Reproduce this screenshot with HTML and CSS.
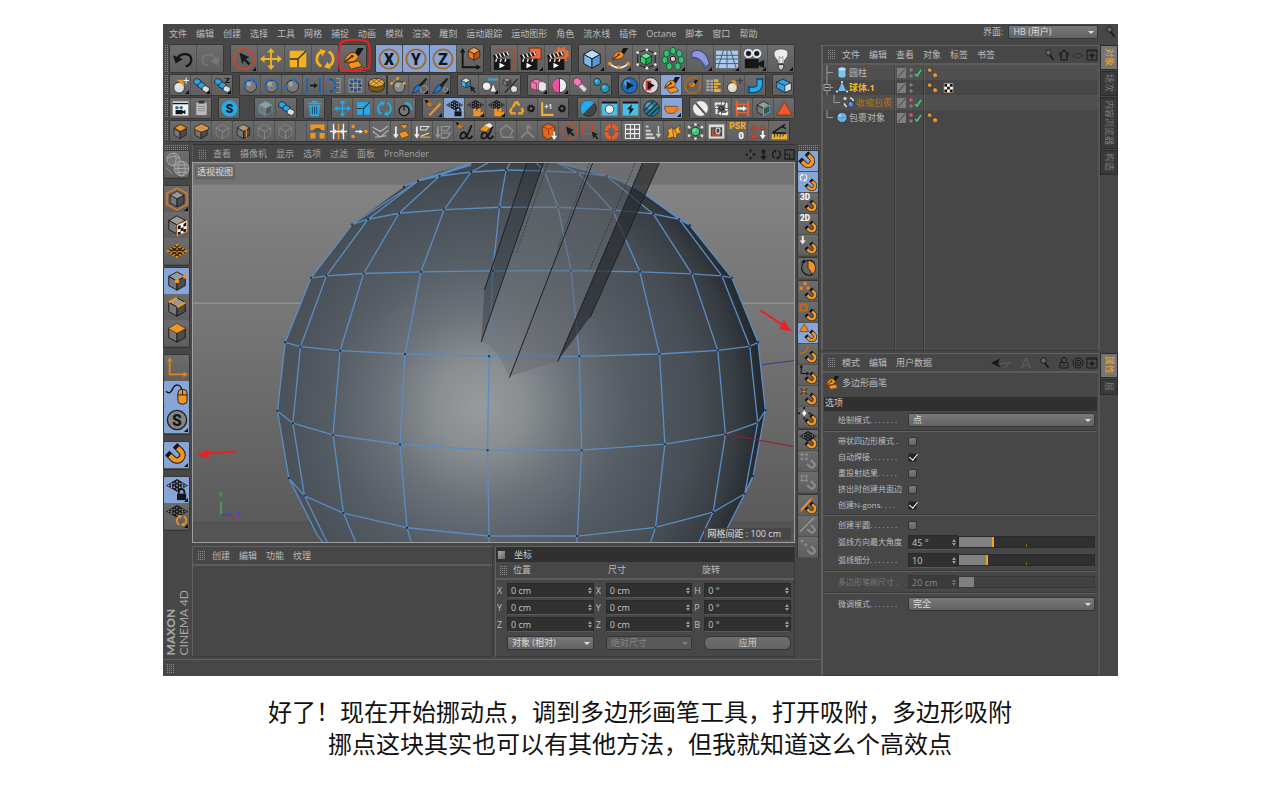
FILE: index.html
```html
<!DOCTYPE html>
<html lang="zh-CN">
<head>
  <meta charset="UTF-8">
  <meta name="viewport" content="width=device-width, initial-scale=1.0">
  <title>多边形画笔</title>
  <link rel="stylesheet" href="styles.css">
</head>
<body>

<main class="app">
  <div class="left">
    <nav class="menubar">
      <a href="#">文件</a><a href="#">编辑</a><a href="#">创建</a><a href="#">选择</a><a href="#">工具</a><a href="#">网格</a><a href="#">捕捉</a><a href="#">动画</a><a href="#">模拟</a><a href="#">渲染</a><a href="#">雕刻</a><a href="#">运动跟踪</a><a href="#">运动图形</a><a href="#">角色</a><a href="#">流水线</a><a href="#">插件</a><a href="#">Octane</a><a href="#">脚本</a><a href="#">窗口</a><a href="#">帮助</a>
    </nav>

    <div class="toolbars">
      <div class="toolbar big" data-tools="undo redo | select* move scale rotate |t pen*^ |w axisX! axisY! axisZ! axisCube | render renderView* renderSet | cubeBlue* spline* subdiv* array* bend* floor* camera* bulb*"></div>
      <div class="toolbar" data-tools="ballStar* slabs* slabsZ* | ballDots ballDots2 ballDots3 arrowsH bracket lattice gold |t ballPin brush1* brush2* | magnetCube figure* cubeBall | pinkCubes* pinkBall* pinkTube teal | playBlue playRed pen! penRing bricks ballPlus pipe | blueBox"></div>
      <div class="toolbar" data-tools="film clip | sBlue |x cubeTeal slabs | trash | moveB scaleB rotateB ballArc | penStick* gridLock! gridCam* gridCam* recycleW axisGearW |w ballHalf screen bolt ballHatch cup!* | slash cycle ladder cubeEdge triRed"></div>
      <div class="toolbar" data-tools="cubeO cubeO2 cubeGhost cubeSplit cubeGhost cubeGhost - bridge stretch dotsO fold weldO weld2 weldGhost penA penB polyGhost armGhost shieldO selRing selBox ringO gridW barsDown puzzle molecule frameAxis psr tris ruler"></div>
    </div>

    <div class="middle">
      <aside class="modes">
        <span class="dots-h"></span>
        <div class="col" data-tools="spheres | modeCube* modeTex modeGrid | modePoint! modeEdge modePoly | modeAxis mouse! sGray!* | magnet!* | gridLock!* gridRot*"></div>
        <div class="brand"><b>MAXON</b><span>CINEMA 4D</span></div>
      </aside>

      <section class="center">
        <header class="viewbar">
          <span class="grip"></span>
          <a href="#">查看</a><a href="#">摄像机</a><a href="#">显示</a><a href="#">选项</a><a href="#">过滤</a><a href="#">面板</a><a href="#">ProRender</a>
          <span class="navicons"><i data-icon="navMove"></i><i data-icon="navZoom"></i><i data-icon="navRot"></i><i data-icon="navMax"></i></span>
        </header>
        <div class="viewport">
          <span class="viewname">透视视图</span>
          <svg viewBox="-231 9 1806 1140">
            <defs>
              <linearGradient id="sky" x1="0" y1="0" x2="0" y2="1">
                <stop offset="0" stop-color="#868686"/><stop offset="1" stop-color="#757575"/>
              </linearGradient>
              <linearGradient id="ground" x1="0" y1="0" x2="0" y2="1">
                <stop offset="0" stop-color="#787878"/><stop offset="1" stop-color="#585858"/>
              </linearGradient>
              <radialGradient id="shade" gradientUnits="userSpaceOnUse" cx="630" cy="740" r="900">
                <stop offset="0" stop-color="#979b9e"/>
                <stop offset=".15" stop-color="#898e91"/>
                <stop offset=".32" stop-color="#6b7178"/>
                <stop offset=".5" stop-color="#545c64"/>
                <stop offset=".72" stop-color="#474e55"/>
                <stop offset=".86" stop-color="#373d43"/>
                <stop offset="1" stop-color="#181c20"/>
              </radialGradient>
            </defs>
            <rect x="-231" y="9" width="1806" height="421" fill="url(#sky)"/>
            <rect x="-231" y="9" width="1806" height="65" fill="#727272"/>
            <rect x="-231" y="430" width="1806" height="719" fill="url(#ground)"/>
            <rect x="-231" y="1085" width="1806" height="64" fill="#545454"/>
            <path d="M-231 430H1575" stroke="#a2a2a2" stroke-width="3"/>
            <!-- sphere body -->
            <path fill="url(#shade)" d="M605 9L510 36 403 80 247 194 124 354 46 548 23 754 57 956 143 1128 160 1149H1353L1427 1003 1452 950 1489 752 1467 548 1388 354 1262 196 1110 92 1012 48 870 9z"/>
            <g class="wire">
              <path d="M403 80L445 63 510 48 605 36 710 30 825 33 925 38 1012 48 1075 65 1110 92"/>
              <path d="M247 194L295 178 388 160 524 149 690 142 866 142 1030 150 1152 162 1230 178 1262 196"/>
              <path d="M124 354L170 348 282 341 454 336 670 333 905 332 1112 336 1268 342 1358 348 1388 354"/>
              <path d="M46 548L92 561 211 573 406 583 659 590 930 590 1171 583 1346 572 1442 560 1467 548"/>
              <path d="M23 754L69 791 190 826 391 855 654 872 937 872 1187 854 1369 824 1466 789 1489 752"/>
              <path d="M57 956L104 1009 221 1061 412 1105 659 1130 924 1130 1159 1104 1332 1058 1427 1003 1452 950"/>
              <path d="M605 9L445 63 247 194 124 354 46 548 23 754 57 956 143 1128 160 1149"/>
              <path d="M605 15L445 63 295 178 170 348 92 561 69 791 104 1009 172 1149"/>
              <path d="M605 9L510 48 388 160 282 341 211 573 190 826 221 1061 258 1149"/>
              <path d="M655 9L605 36 524 149 454 336 406 583 391 855 412 1105 425 1149"/>
              <path d="M722 9L710 30 690 142 670 333 659 590 654 872 659 1149"/>
              <path d="M800 9L825 33 866 142 905 332 930 590 937 872 924 1130 922 1149"/>
              <path d="M862 9L925 38 1030 150 1112 336 1171 583 1187 854 1159 1104 1144 1149"/>
              <path d="M890 14L1012 48 1152 162 1268 342 1346 572 1369 824 1332 1058 1289 1149"/>
              <path d="M870 9L1075 65 1230 178 1358 348 1442 560 1466 789 1427 1003 1353 1149"/>
              <path d="M1075 65L1262 196 1388 354 1467 548 1489 752 1452 950 1427 1003"/>
            </g>
            <path class="points" d="M403 80h0M445 63h0M510 48h0M605 36h0M710 30h0M825 33h0M925 38h0M1012 48h0M247 194h0M295 178h0M388 160h0M524 149h0M690 142h0M866 142h0M1030 150h0M1152 162h0M1230 178h0M1262 196h0M124 354h0M170 348h0M282 341h0M454 336h0M670 333h0M905 332h0M1112 336h0M1268 342h0M1358 348h0M1388 354h0M46 548h0M92 561h0M211 573h0M406 583h0M659 590h0M930 590h0M1171 583h0M1346 572h0M1442 560h0M1467 548h0M23 754h0M69 791h0M190 826h0M391 855h0M654 872h0M937 872h0M1187 854h0M1369 824h0M1466 789h0M1489 752h0M57 956h0M104 1009h0M221 1061h0M412 1105h0M659 1130h0M924 1130h0M1159 1104h0M1332 1058h0M1427 1003h0M1452 950h0"/>
            <!-- cylinder -->
            <path fill="#2c3237" fill-opacity=".4" d="M772 9H822L635 545 645 388z"/>
            <path fill="#6c7176" fill-opacity=".5" d="M822 9H970L720 650 690 592 660 557 635 545z"/>
            <path fill="#656a70" fill-opacity=".5" d="M970 9H1120L865 604 720 650z"/>
            <path fill="#2a2c2f" fill-opacity=".7" d="M1120 9H1170L962 472 865 604z"/>
            <path fill="none" stroke="#1d2023" stroke-width="3" d="M772 9L645 390M822 9L635 547M970 9L720 654M1120 9L865 606M1170 9L962 474"/>
            <path fill="none" stroke="#2a2e32" stroke-width="2" stroke-dasharray="6 4" d="M836 9L740 280M960 9L866 262M1098 9L962 328"/>
            <!-- world axes -->
            <path d="M1478 615L1575 603" stroke="#3a3a9a" stroke-width="3"/>
            <path d="M1369 824L1575 861" stroke="#8e2028" stroke-width="3"/>
            <path d="M-147 1027V1067" stroke="#4db04d" stroke-width="4"/>
            <path d="M-147 1067H-114" stroke="#3a3ad0" stroke-width="4"/>
            <path d="M-138 1069H-118" stroke="#c03030" stroke-width="3"/>
            <g font-family="Open Sans, sans-serif" font-size="24">
              <text x="-155" y="1014" fill="#4fc04f">Y</text>
              <text x="-108" y="1078" fill="#d03030">X</text>
              <text x="-102" y="1073" fill="#3c3cf0">Z</text>
            </g>
            <g class="marks">
              <path d="M-105 876L-190 882"/><path class="tip" d="M-216 886L-182 870 -190 882 -180 896z"/>
              <path d="M1476 453L1542 496"/><path class="tip" d="M1566 514L1530 507 1541 496 1544 482z"/>
            </g>
          </svg>
          <span class="spacing">网格间距 : 100 cm</span>
        </div>

        <div class="bottom">
          <section class="panel materials">
            <header><span class="grip"></span><a href="#">创建</a><a href="#">编辑</a><a href="#">功能</a><a href="#">纹理</a></header>
          </section>
          <section class="panel coords">
            <h2><i class="led"></i>坐标</h2>
            <div class="heads"><span class="grip"></span><span>位置</span><span>尺寸</span><span>旋转</span></div>
            <form class="grid">
              <label for="px">X</label><span class="num"><input id="px" value="0 cm"></span>
              <label for="sx">X</label><span class="num"><input id="sx" value="0 cm"></span>
              <label for="rh">H</label><span class="num"><input id="rh" value="0 °"></span>
              <label for="py">Y</label><span class="num"><input id="py" value="0 cm"></span>
              <label for="sy">Y</label><span class="num"><input id="sy" value="0 cm"></span>
              <label for="rp">P</label><span class="num"><input id="rp" value="0 °"></span>
              <label for="pz">Z</label><span class="num"><input id="pz" value="0 cm"></span>
              <label for="sz">Z</label><span class="num"><input id="sz" value="0 cm"></span>
              <label for="rb">B</label><span class="num"><input id="rb" value="0 °"></span>
              <span class="drop c2"><select aria-label="坐标"><option>对象 (相对)</option></select></span>
              <span class="drop c4 off"><select aria-label="尺寸" disabled><option>绝对尺寸</option></select></span>
              <button type="button" class="apply">应用</button>
            </form>
          </section>
        </div>
      </section>

      <aside class="snaps">
        <span class="dots-h"></span>
        <div class="col small" data-tools="magnet! snapRot! snap3D snap2D snapDown | pieO | snapPts snapSq snapTri! snapArc snapAxis snapX snapStar | snapGrid snapG1 snapG2 | snapLine snapG3 snapG4"></div>
      </aside>
    </div>

    <footer class="status"><span class="grip"></span></footer>
  </div>

  <div class="right">
    <div class="layout">
      <label for="layout">界面:</label>
      <span class="drop"><select id="layout"><option>HB (用户)</option></select></span>
      <i data-icon="search"></i>
    </div>

    <section class="dock objects">
      <div class="panel">
        <header>
          <span class="grip"></span><a href="#">文件</a><a href="#">编辑</a><a href="#">查看</a><a href="#">对象</a><a href="#">标签</a><a href="#">书签</a>
          <span class="tools"><i data-icon="search"></i><i data-icon="home"></i><i data-icon="eye"></i><i data-icon="plusBox"></i></span>
        </header>
        <ul class="tree">
          <li><span class="name"><i data-icon="branch"></i><i data-icon="objCyl"></i>圆柱</span><span class="flags" data-flags="gray check"></span><span class="tags"><i data-icon="phong"></i></span></li>
          <li class="sel"><span class="name"><i data-icon="branchBox"></i><i data-icon="objPoly"></i>球体.1</span><span class="flags" data-flags="gray"></span><span class="tags"><i data-icon="phong"></i><i data-icon="checker"></i></span></li>
          <li class="child"><span class="name"><i data-icon="branchEnd"></i><i data-icon="objWrap"></i>收缩包裹</span><span class="flags" data-flags="red check"></span><span class="tags"></span></li>
          <li><span class="name"><i data-icon="branchEnd"></i><i data-icon="objBall"></i>包裹对象</span><span class="flags" data-flags="red check"></span><span class="tags"><i data-icon="phong"></i></span></li>
        </ul>
      </div>
      <nav class="tabs"><a href="#" class="on">对象</a><a href="#">场次</a><a href="#">内容浏览器</a><a href="#">构造</a></nav>
    </section>

    <section class="dock attrs">
      <div class="panel">
        <header>
          <span class="grip"></span><a href="#">模式</a><a href="#">编辑</a><a href="#">用户数据</a>
          <span class="tools"><i data-icon="backFwd" class="wide"></i><i data-icon="upGhost" class="apart"></i><i data-icon="search" class="apart"></i><i data-icon="lock"></i><i data-icon="target"></i><i data-icon="plusBox"></i></span>
        </header>
        <div class="toolname"><i data-icon="pen"></i>多边形画笔</div>
        <h2>选项</h2>
        <form>
          <div class="row tall"><label for="mode">绘制模式<span>. . . . . . .</span></label><span class="drop"><select id="mode"><option>点</option></select></span></div>
          <hr>
          <div class="row"><label for="strip">带状四边形模式<span> .</span></label><input type="checkbox" id="strip"></div>
          <div class="row"><label for="weld">自动焊接<span>. . . . . . .</span></label><input type="checkbox" id="weld" checked></div>
          <div class="row"><label for="proj">重投射结果<span>. . . . .</span></label><input type="checkbox" id="proj"></div>
          <div class="row"><label for="coplanar">挤出时创建共面边</label><input type="checkbox" id="coplanar"></div>
          <div class="row"><label for="ngons">创建N-gons<span>. . . .</span></label><input type="checkbox" id="ngons" checked></div>
          <hr>
          <div class="row"><label for="half">创建半圆<span>. . . . . . .</span></label><input type="checkbox" id="half"></div>
          <div class="row tall"><label for="angle">弧线方向最大角度</label><span class="num"><input id="angle" value="45 °"></span><input type="range" aria-label="弧线方向最大角度" min="0" max="180" value="45" style="--fill:25%"></div>
          <div class="row tall"><label for="subd">弧线细分<span>. . . . . . .</span></label><span class="num"><input id="subd" value="10"></span><input type="range" aria-label="弧线细分" min="0" max="50" value="10" style="--fill:20%"></div>
          <hr>
          <div class="row tall off"><label for="size">多边形笔刷尺寸<span> .</span></label><span class="num"><input id="size" value="20 cm" disabled></span><input type="range" aria-label="多边形笔刷尺寸" min="0" max="200" value="20" style="--fill:10%" disabled></div>
          <hr>
          <div class="row tall"><label for="tweak">微调模式<span>. . . . . . .</span></label><span class="drop"><select id="tweak"><option>完全</option></select></span></div>
        </form>
      </div>
      <nav class="tabs"><a href="#" class="on">属性</a><a href="#">层</a></nav>
    </section>
  </div>
</main>

<p class="caption">好了！现在开始挪动点，调到多边形画笔工具，打开吸附，多边形吸附<br>挪点这块其实也可以有其他方法，但我就知道这么个高效点</p>

<script src="icons.js"></script>
</body>
</html>
```
FILE: styles.css
```css
* {
  box-sizing: border-box;
}
body {
  margin: 0;
  background: #fff;
  font-family: "Open Sans", "Noto Sans CJK SC", sans-serif;
}
.app {
  display: grid;
  grid-template-columns: 1fr 298px;
  margin: 24px 162px 0 163px;
  background: #474747;
  color: #bcbcbc;
  font-size: 9px;
  line-height: 12px;
}
a {
  color: inherit;
  text-decoration: none;
  white-space: nowrap;
}
h2 {
  margin: 0;
  font-size: 9px;
  font-weight: normal;
}
i {
  display: inline-flex;
  font-style: normal;
}
svg {
  display: block;
}
.grip, .dots-h, .toolbar::before {
  flex: none;
  background: conic-gradient(#8c8c8c 25%, transparent 0) 0 0 / 2px 2px;
}
.grip {
  width: 9px;
  height: 9px;
}
.dots-h {
  height: 5px;
}

/* menus and toolbars */
.menubar {
  display: flex;
  gap: 9px;
  height: 19px;
  align-items: center;
  padding: 0 6px;
}
.toolbars {
  display: flex;
  flex-direction: column;
  gap: 3px;
  padding: 2px 0 3px 1px;
}
.toolbar {
  display: flex;
  height: 20px;
}
.toolbar.big {
  height: 27px;
}
.toolbar::before {
  content: "";
  width: 5px;
  margin-right: 1px;
}
.group {
  display: flex;
  gap: 1px;
  margin-right: 8px;
  background: #525252;
  border-radius: 2px;
  box-shadow: 0 0 0 1px #363636;
}
.group.before-tight {
  margin-right: 2px;
}
.group.before-wide {
  margin-right: 10px;
}
.group.before-extra {
  margin-right: 16px;
}
.tool {
  position: relative;
  display: flex;
  align-items: center;
  justify-content: center;
  width: 20px;
  padding: 0;
  border: 0;
  border-radius: 1px;
  background: linear-gradient(#6c6c6c, #5f5f5f);
}
.tool svg {
  width: 17px;
  height: 17px;
  overflow: visible;
}
.tool.w {
  width: 30px;
}
.tool.w svg {
  width: 27px;
}
.filler {
  width: 10px;
  background: #666;
}
.big .tool {
  width: 26px;
}
.big .tool svg {
  width: 22px;
  height: 22px;
}
.tool.on {
  background: #87a5d6;
}
.tool.menu::after {
  content: "";
  position: absolute;
  right: 1px;
  bottom: 1px;
  border: 2px solid transparent;
  border-right-color: #111;
  border-bottom-color: #111;
}
.big .tool .ring {
  position: absolute;
  left: -3px;
  top: -7px;
  width: 36px;
  height: 34px;
  z-index: 2;
}

/* middle */
.middle {
  display: grid;
  grid-template-columns: 29px 1fr 24px;
}
.modes, .snaps {
  display: flex;
  flex-direction: column;
}
.modes {
  padding: 1px 3px 0 1px;
}
.snaps {
  padding: 1px 2px 0;
}
.col {
  display: flex;
  flex-direction: column;
  margin-top: 1px;
}
.col .group {
  flex-direction: column;
  gap: 0;
  margin: 0 0 8px;
  border-bottom: 1px solid #555;
}
.col .group:nth-child(2) {
  margin-bottom: 3px;
}
.col .tool {
  width: 100%;
  height: 26px;
  box-shadow: 0 1px #525252;
}
.col .tool svg {
  width: 22px;
  height: 22px;
}
.col.small .group {
  gap: 1px;
  margin: 0 0 3px;
  border: 0;
}
.col.small .tool {
  height: 20px;
}
.col.small .tool svg {
  width: 18px;
  height: 18px;
}
.brand {
  display: flex;
  flex-direction: column;
  align-items: flex-start;
  align-self: flex-start;
  margin: auto 0 4px;
  writing-mode: vertical-rl;
  transform: rotate(180deg);
  color: #a6a6a6;
  font-family: Lato, sans-serif;
  font-size: 12px;
  line-height: 13px;
}
.brand b {
  font-weight: 900;
}
.center {
  min-width: 0;
}
.viewbar {
  display: flex;
  align-items: center;
  gap: 9px;
  height: 18px;
  padding: 1px 1px 0 5px;
  border-top: 1px solid #333;
  border-left: 1px solid #5a5a5a;
  color: #a2a2a2;
}
.viewbar .grip {
  margin-right: -3px;
}
.navicons {
  display: flex;
  gap: 2px;
  margin-left: auto;
}
.navicons svg {
  width: 11px;
  height: 11px;
}
.viewport {
  position: relative;
  border: 1px solid #a0a0a0;
  margin-right: 1px;
}
.viewport svg {
  width: 100%;
}
.viewname, .spacing {
  position: absolute;
  padding: 0 1px;
  color: #ddd;
  background: #6a6a6a;
}
.viewname {
  left: 2px;
  top: 2px;
  border: 1px solid #5c5c5c;
  border-radius: 2px;
}
.spacing {
  right: 3px;
  bottom: 2px;
  padding: 0 10px 0 4px;
  background: #474747;
}
.wire {
  fill: none;
  stroke: #5b8cc2;
  stroke-width: 4;
  stroke-linejoin: round;
}
.points {
  stroke: #1f3145;
  stroke-width: 6;
  stroke-linecap: square;
}
.marks {
  stroke: #ee2024;
  stroke-width: 6;
  stroke-linecap: round;
}
.marks .tip {
  fill: #ee2024;
  stroke-width: 2;
}

/* panels */
.panel {
  border: 1px solid #606060;
  border-color: #606060 #3a3a3a #3a3a3a #606060;
}
.panel > header {
  display: flex;
  align-items: center;
  gap: 9px;
  height: 19px;
  padding: 0 0 0 4px;
  border-bottom: 2px solid #5c5c5c;
}
.panel .grip {
  margin-right: -3px;
}
.bottom {
  display: grid;
  grid-template-columns: 1fr 300px;
  gap: 2px;
  padding: 3px 1px 2px 0;
}
.coords h2, .attrs h2 {
  background: #303030;
  color: #ccc;
}
.coords h2 {
  display: flex;
  align-items: center;
  gap: 9px;
  height: 15px;
  padding-left: 2px;
}
.led {
  width: 7px;
  height: 8px;
  background: linear-gradient(135deg, #aaa, #666);
}
.heads {
  display: grid;
  grid-template-columns: 10px 95px 94px 1fr;
  align-items: center;
  height: 18px;
  padding-left: 3px;
  border-bottom: 2px solid #5c5c5c;
}
.heads span:nth-child(n+2) {
  padding-left: 4px;
}
.coords .grid {
  display: grid;
  grid-template-columns: 8px 1fr 8px 1fr 8px 1fr;
  gap: 2px;
  padding: 3px 3px 6px 1px;
  align-items: center;
}
.num, .drop {
  position: relative;
  display: block;
}
.num input {
  display: block;
  width: 100%;
  height: 15px;
  padding: 0 3px;
  border: 1px solid #2a2a2a;
  border-bottom-color: #5a5a5a;
  background: #303030;
  color: #c4c4c4;
  font: inherit;
}
.num::before, .num::after {
  content: "";
  position: absolute;
  right: 2px;
  top: 4px;
  border: 2px solid transparent;
  border-top-width: 0;
  border-bottom: 3px solid #999;
}
.num::after {
  top: 8px;
  border-top: 3px solid #999;
  border-bottom-width: 0;
}
.drop select {
  display: block;
  width: 100%;
  height: 14px;
  padding: 0 4px;
  border: 1px solid #353535;
  border-radius: 2px;
  appearance: none;
  background: linear-gradient(#7a7a7a, #626262);
  color: #ddd;
  font: inherit;
  opacity: 1;
}
.drop::after {
  content: "";
  position: absolute;
  right: 4px;
  top: 6px;
  border: 3px solid transparent;
  border-top-color: #ddd;
  border-bottom-width: 0;
}
.drop.off select {
  background: #595959;
  color: #858585;
}
.drop.off::after {
  border-top-color: #808080;
}
.c2 {
  grid-column: 2;
}
.c4 {
  grid-column: 4;
}
.apply {
  grid-column: 6;
  height: 14px;
  padding: 0;
  border: 1px solid #353535;
  border-radius: 6px;
  background: linear-gradient(#6e6e6e, #646464);
  color: #ccc;
  font: inherit;
}
.coords .drop, .apply {
  margin-top: 2px;
}
.status {
  display: flex;
  align-items: center;
  height: 17px;
  padding-left: 3px;
  border-top: 1px solid #606060;
}

/* right side */
.right {
  display: flex;
  flex-direction: column;
  padding-left: 1px;
}
.layout {
  display: flex;
  align-items: center;
  height: 21px;
  padding: 0 1px 5px 162px;
}
.layout .drop {
  flex: 1;
  margin: 0 7px 0 5px;
}
.layout svg, .tools svg {
  width: 12px;
  height: 12px;
}
.dock {
  display: grid;
  grid-template-columns: 1fr 18px;
}
.objects {
  height: 306px;
}
.attrs {
  flex: 1;
  margin-top: 2px;
}
.dock > .panel {
  display: flex;
  flex-direction: column;
  border-width: 1px 2px;
  border-right-color: #555;
}
.tools {
  display: flex;
  gap: 2px;
  margin-left: auto;
}
.tools .wide svg {
  width: 28px;
}
.tools .apart {
  margin-right: 5px;
}
.tree {
  flex: 1;
  margin: 0;
  padding: 0;
  list-style: none;
  background: linear-gradient(90deg, transparent 71px, #383838 71px 72px, #555 72px 73px, transparent 73px 100px, #383838 100px 101px, #555 101px 102px, transparent 102px);
}
.tree li {
  display: grid;
  grid-template-columns: 72px 29px 1fr;
  align-items: center;
  height: 15px;
}
.tree li:nth-child(odd) {
  background: rgba(255, 255, 255, .05);
}
.name {
  display: flex;
  align-items: center;
  gap: 1px;
  white-space: nowrap;
}
.name svg {
  width: 12px;
  height: 15px;
}
.sel .name {
  color: #f5b52a;
  font-weight: bold;
}
.child .name {
  padding-left: 7px;
  color: #b8740f;
}
.flags, .tags {
  display: flex;
  gap: 2px;
  padding-left: 2px;
}
.flags svg {
  width: 25px;
  height: 12px;
}
.tags svg {
  width: 11px;
  height: 12px;
}
.tags {
  padding-left: 3px;
  gap: 5px;
}
.tabs {
  display: flex;
  flex-direction: column;
  gap: 1px;
}
.tabs a {
  padding: 2px 0 3px;
  border: 1px solid #2b2b2b;
  background: #3a3a3a;
  color: #7c7c7c;
  line-height: 15px;
  writing-mode: vertical-rl;
  text-orientation: sideways;
}
.tabs .on {
  background: #757575;
  color: #f6a51c;
}
.toolname {
  display: flex;
  align-items: center;
  gap: 3px;
  height: 24px;
  padding: 0 0 4px 2px;
}
.toolname svg {
  width: 14px;
  height: 14px;
}
.attrs h2 {
  margin: 0 1px;
  height: 14px;
  padding-left: 1px;
}
.row {
  display: grid;
  grid-template-columns: 70px 50px 1fr;
  align-items: center;
  height: 16px;
  padding: 0 3px 0 15px;
}
.row.tall {
  height: 18px;
}
.row label {
  font-size: 8px;
  white-space: nowrap;
}
.row .drop {
  grid-column: 2 / 4;
}
.row.off {
  color: #777;
}
.row.off .num {
  opacity: .5;
}
hr {
  height: 2px;
  margin: 1px;
  border: 0;
  border-top: 1px solid #383838;
  background: #606060;
}
input[type="checkbox"] {
  width: 9px;
  height: 9px;
  margin: 0;
  border: 1px solid #333;
  border-radius: 2px;
  appearance: none;
  background: linear-gradient(#7a7a7a, #666);
}
input[type="checkbox"]:checked {
  position: relative;
  background: #222;
}
input[type="checkbox"]:checked::after {
  content: "";
  position: absolute;
  left: 2px;
  top: -2px;
  width: 4px;
  height: 7px;
  border: solid #fff;
  border-width: 0 1px 1px 0;
  transform: rotate(40deg);
}
input[type="range"] {
  width: 100%;
  height: 12px;
  margin: 0;
  appearance: none;
  border: 1px solid #2a2a2a;
  background:
    linear-gradient(#8a6418, #8a6418) 50% 100% / 1px 3px no-repeat,
    linear-gradient(90deg, #828282 var(--fill), #303030 var(--fill));
}
input[type="range"]::-webkit-slider-thumb {
  appearance: none;
  width: 2px;
  height: 10px;
  background: #f5a31a;
}
input[type="range"]:disabled {
  background: linear-gradient(90deg, #808080 var(--fill), #414141 var(--fill));
  border-color: #383838;
}
input[type="range"]:disabled::-webkit-slider-thumb {
  background: #808080;
}

.caption {
  margin: 19px 0;
  color: #111;
  font-family: "Noto Sans CJK SC", sans-serif;
  font-size: 24px;
  font-weight: 400;
  line-height: 32px;
  text-align: center;
}
```
FILE: icons.js
```js
const O = '#f39322', B = '#26a9e8', K = '#161616';

// shared shapes, all on a 24 x 24 board
const at = (x, y, s, body) => `<g transform="translate(${x} ${y}) scale(${s})">${body}</g>`;
const cube = (t, l, r, line = K) => `<g stroke="${line}" stroke-linejoin="round"><path fill="${t}" d="M12 2l9 5-9 5-9-5z"/><path fill="${l}" d="M3 7l9 5v10l-9-5z"/><path fill="${r}" d="M21 7v10l-9 5V12z"/></g>`;
const grayCube = cube('#999', '#777', '#4c4c4c');
const ghostCube = cube('none', 'none', 'none', '#8a8a8a');
const ball = (x, y, r, c) => `<circle cx="${x}" cy="${y}" r="${r}" fill="${c}" stroke="${K}"/><circle cx="${x - r * .3}" cy="${y - r * .35}" r="${r * .4}" fill="#fff" opacity=".3"/>`;
const dots = (pts, c, r = 1.5) => pts.map(p => `<circle cx="${p[0]}" cy="${p[1]}" r="${r}" fill="${c}"/>`).join('');
const line = (d, c, w = 2) => `<path d="${d}" fill="none" stroke="${c}" stroke-width="${w}"/>`;
const shape = (d, c, s = 'none') => `<path d="${d}" fill="${c}" stroke="${s}"/>`;
const text = (x, y, size, s, c = K) => `<text x="${x}" y="${y}" font-size="${size}" font-family="Roboto, sans-serif" font-weight="900" text-anchor="middle" fill="${c}">${s}</text>`;
const nib = shape('M14 6l3-6h7l-6 9z', K) + shape('M2 16C4 9 8 4 14 5l4 4c-1 4-6 7-10 6z', O, '#5a3408') + line('M3 15l7-5', '#3d2408', 1.5) + dots([[11, 9]], '#3d2408', 1.5);
const cursor = shape('M7 5l11 5-4 2 5 5-2 2-5-5-2 4z', '#1c1c1c');
const magnet = `<g transform="rotate(-45 12 12)">${line('M6 3v9a6 6 0 0 0 12 0V3', K, 7)}${line('M6 7v5a6 6 0 0 0 12 0V7', O, 5)}</g>`;
const ghostMagnet = `<g transform="rotate(-45 12 12)">${line('M6 3v9a6 6 0 0 0 12 0V3', '#8b8b8b', 5)}</g>`;
const snap = body => body + at(8, 8, .75, magnet);
const ghostSnap = body => body + at(10, 10, .6, ghostMagnet);
const mesh = c => shape('M12 0l12 7-12 7L0 7z', '#1c1c1c') + dots([[12, 3], [9, 5], [15, 5], [6, 7], [12, 7], [18, 7], [9, 9], [15, 9], [12, 11], [3, 7], [21, 7], [6, 5], [18, 5], [6, 9], [18, 9]], c, 1);
const arrows = c => line('M12 3v18M3 12h18', c, 2) + shape('M12 0l4 5H8zM12 24l4-5H8zM0 12l5-4v8zM24 12l-5-4v8z', c);
const scaleBox = c => shape('M3 3h18v18H3z', c) + line('M3 12h9v9M12 12l9-9', '#333', 1.5);
const turn = c => line('M8 20A9 9 0 0 1 8 4M16 4a9 9 0 0 1 0 16', c, 3) + shape('M6 1l7 2-4 6zM18 23l-7-2 4-6z', c);
const clapper = shape('M1 12h18v12H1z', K) + shape('M0 8l17-4 1 4L1 12z', K) + line('M3 7l2 4M7 6l2 4M11 5l2 4M15 4l2 4M4 12l-1 3M9 12l-1 3M14 12l-1 3', '#eee', 1.5) + shape('M7 16l6 3-6 3z', '#fff');
const gear = (x, y, r, c) => `<circle cx="${x}" cy="${y}" r="${r}" fill="none" stroke="${c}" stroke-width="${r * .7}"/><circle cx="${x}" cy="${y}" r="${r * 1.4}" fill="none" stroke="${c}" stroke-width="${r * .5}" stroke-dasharray="${r * .55}"/>`;
const ringLetter = s => `<circle cx="12" cy="12" r="10.5" fill="none" stroke="#a5682a" stroke-width="2"/>` + text(12, 18, 17, s);
const slabs = (c1, c2, c3) => [[1, 2, c1], [7, 7, c2], [13, 12, c3]].map(([x, y, c]) => shape(`M${x} ${y + 3}l4-3 6 3v4l-4 3-6-3z`, c, K)).join('');
const brush = shape('M21 1l2 2-9 12-4-3z', '#222') + shape('M10 11l4 3c-1 5-6 8-13 9 4-4 4-10 9-12z', '#1f78d0', '#123');
const sphere = ball(12, 13, 8.5, '#7d7d7d');
const cam = shape('M9 16h10v7H9zM19 18l4-2v6l-4-2z', O) + dots([[11, 14], [17, 14]], O, 2.5);
const check = c => shape('M2 2h20v20H2z', '#fff', c) + shape('M3 3h6v6H3zM15 3h6v6h-6zM9 9h6v6H9zM3 15h6v6H3zM15 15h6v6h-6z', '#111');

const icons = {
  undo: line('M6 11c4-6 15-6 15 2 0 4-3 6-6 7', K, 2.5) + shape('M1 8l3 9 8-5z', K),
  redo: line('M18 12c-3-7-14-6-14 1 0 4 3 6 6 6', '#7b7b7b', 1.5) + shape('M22 9l-1 10-9-5z', '#777'),
  select: `<circle cx="12" cy="12" r="11" fill="none" stroke="#c5472a" stroke-width="2"/>` + cursor,
  move: arrows('#f7b020'),
  scale: scaleBox('#f7b020'),
  rotate: turn('#f7b020'),
  pen: nib + shape('M6 17l12-3 4 6-12 3z', O, '#5a3408'),
  axisX: ringLetter('X'), axisY: ringLetter('Y'), axisZ: ringLetter('Z'),
  axisCube: line('M4 4v17h16', K, 2) + shape('M4 0l3 5H1zM24 21l-5-3v6z', K) + at(8, -2, .7, cube('#f7a04a', '#e8791c', '#b95a10')),
  render: line('M0 2h23v21h-4', '#b04a2a', 1.5) + clapper,
  renderView: shape('M10 0h13v12H12z', '#ec6a35', '#722') + clapper,
  renderSet: gear(16, 7, 5, '#ec6a35') + clapper,
  cubeBlue: cube('#b9dcf8', '#7db9ec', '#5a97cf'),
  spline: at(3, 0, .8, nib) + line('M2 17q10 9 20 0', '#eee', 2) + dots([[2, 17], [22, 17], [12, 21]], '#f39322', 2),
  subdiv: at(4, 4, .67, cube('#6fe59a', '#3ecb74', '#1fa350')) + line('M3 5l10-3 9 4v12l-9 4-10-4z', K, 1) + dots([[3, 5], [13, 2], [22, 6], [22, 18], [13, 22], [3, 18]], '#eee'),
  array: [[12, 3], [19, 6], [21, 13], [17, 20], [8, 20], [3, 13], [5, 6]].map(p => shape(`M${p[0] - 3} ${p[1] - 2}l3-2 3 2v4l-3 2-3-2z`, '#36c26c', '#154')).join('') + ball(12, 12, 3, '#ccc'),
  bend: shape('M3 5c7-6 17 0 19 12l-5 5C15 15 10 10 3 11z', '#8f97dc', '#333a70') + line('M4 10c7 0 12 5 14 11', '#454d90', 1),
  floor: shape('M0 3h24v19H0z', '#a9c9ee') + line('M0 8h24M0 12h24M0 17h24M8 3L2 22M16 3l6 19M12 3v19', '#456', 1),
  camera: line('M6 6m-4 0a4 4 0 1 0 8 0a4 4 0 1 0-8 0M15 6m-4 0a4 4 0 1 0 8 0a4 4 0 1 0-8 0', '#dceaf5', 2) + dots([[6, 6], [15, 6]], K, 2.5) + shape('M2 12h15v10H2zM17 16l6-3v9l-6-3z', K),
  bulb: shape('M12 1c10 0 9 8 4 12l-1 4H9l-1-4C3 9 2 1 12 1z', '#ececec', '#555') + shape('M9 18h6v3l-2 3h-2l-2-3z', '#ccc', '#333') + line('M10 16V9l2 2 2-2v7', '#999', 1),

  ballStar: ball(10, 15, 7.5, '#ddd') + shape('M6 4l9 0 3 9z', O) + line('M20 1v8M16 5h8', '#eee', 1.5),
  slabs: slabs('#2ea2e2', '#2ea2e2', '#ddd'),
  slabsZ: slabs('#2ea2e2', '#2ea2e2', '#ddd') + text(19, 9, 11, 'Z'),
  ballDots: sphere + dots([[4, 12], [6, 5], [14, 4], [20, 9]], '#1c6ed8', 2.5),
  ballDots2: sphere + dots([[4, 14], [7, 5], [17, 5], [20, 14]], '#1c6ed8', 2.5),
  ballDots3: sphere + dots([[3, 14], [14, 4]], '#1c6ed8', 2.5),
  arrowsH: dots([[3, 3], [3, 9], [3, 15], [3, 21], [21, 3], [21, 9], [21, 15], [21, 21]], '#1c6ed8', 2) + line('M3 3v18M21 3v18', '#345', 1) + line('M7 12h7', K, 2.5) + shape('M18 12l-5-4v8z', K),
  bracket: line('M4 3c12 0 12 18 0 18', '#333', 1.5) + line('M14 2h6v20h-6M14 8h6M14 15h6', '#aaa', 1) + dots([[4, 3], [11, 6], [13, 12], [11, 18], [4, 21]], '#1c6ed8', 2),
  lattice: line('M3 3h18v18H3zM3 9h18M3 15h18M9 3v18M15 3v18', '#aaa', 1) + dots([[12, 5], [17, 7], [19, 12], [17, 17], [12, 19], [7, 17], [5, 12], [7, 7]], '#1c4e98', 2),
  gold: shape('M1 8v7c0 8 22 8 22 0V8z', '#7b5a16', K) + `<ellipse cx="12" cy="8" rx="11" ry="6" fill="#f0b43a" stroke="${K}"/>` + line('M5 4l13 9M10 2l11 8M19 4L6 13M14 2L3 10', '#6a4a10', 1),
  ballPin: ball(13, 14, 8, '#8a8a8a') + line('M2 9l9-7', '#c88a20', 1.5) + dots([[2, 9], [11, 2], [20, 9]], '#e2a730', 2),
  brush1: brush + `<circle cx="18" cy="17" r="5" fill="none" stroke="#aaa"/>`,
  brush2: brush + `<circle cx="19" cy="18" r="3" fill="none" stroke="#aaa"/>`,
  magnetCube: at(0, 0, .7, cube('#ddd', '#4ab0dd', '#2a7ba8')) + at(9, 9, .7, cursor),
  figure: shape('M10 2h14v3H10z', B) + ball(8, 13, 6, '#eee') + shape('M17 8l5 13h-9z', '#eee', '#444'),
  cubeBall: at(0, 0, .6, grayCube) + ball(17, 17, 5, '#ddd') + line('M4 22L22 3', '#222', 1.5),
  pinkCubes: shape('M1 6l8-3 8 3v10l-8 3-8-3z', '#f07ab4', '#702048') + shape('M12 8l5-2 6 3v9l-6 3-5-3z', '#e6e6e6', '#555') + line('M1 6l8 3v10', '#702048', 1),
  pinkBall: ball(12, 12, 10, '#eee') + shape('M12 2a10 10 0 0 0 0 20z', '#f04fa0') + line('M12 2v20', K, 1),
  pinkTube: line('M10 10l9 9', '#777', 8) + line('M10 10l9 9', '#ddd', 5) + shape('M2 3l6-2 5 4v6l-6 2-5-4z', '#f07ab4', '#702048'),
  teal: ball(6, 7, 5, '#1e9ec0') + ball(17, 16, 6, '#1e9ec0'),
  playBlue: ball(12, 12, 11, '#1b6fc4') + shape('M8 6l10 6-10 6z', K),
  playRed: ball(12, 12, 11, '#d9d9d9') + shape('M5 5h8v14H5z', '#dd3b33') + shape('M8 6l10 6-10 6z', K),
  penRing: `<circle cx="12" cy="12" r="11" fill="none" stroke="#b8691c" stroke-width="2"/>` + at(4, 4, .68, nib),
  bricks: shape('M2 4h16v16H2z', '#aaa') + shape('M13 3h6v5h3v4h-5v4h5v5h-9z', '#f2ad2c') + line('M2 8h20M2 12h20M2 16h20M7 4v16M12 4v16', '#555', 1),
  ballPlus: ball(9, 15, 7, '#e6dcc8') + shape('M6 5h7l3 8z', O) + line('M20 1v9M15 5h9', '#444', 2),
  pipe: line('M1 18h9c5 0 8-3 8-8V2', '#0b4a70', 9) + line('M2 18h8c5 0 8-3 8-8V3', B, 6) + line('M13 3h10M3 13v10', '#0b4a70', 2),
  blueBox: shape('M2 7l9-4 12 6v9l-9 4L2 15z', '#2ea2e2', K) + shape('M14 12l9-4v10l-9 4z', '#dcdcdc', K) + line('M2 7l12 5', K, 1),

  film: shape('M1 2h22v20H1z', '#f2f2f2') + line('M1 5h22', K, 2) + shape('M5 14h10v6H5zM15 16l4-2v6l-4-2z', K) + dots([[7, 11], [13, 11]], '#287090', 2.5),
  clip: shape('M4 3h16v19H4z', '#bbb', '#555') + shape('M8 1h8v4H8z', '#333') + line('M7 9h10M7 12h10M7 15h10', '#777', 1),
  sBlue: `<circle cx="12" cy="12" r="11.5" fill="${B}"/>` + text(12, 18, 17, 'S'),
  cubeTeal: cube('#9a9a9a', '#777', '#565656', '#39b0cc'),
  trash: shape('M4 7h16l-2 16H6z', B) + line('M3 5h18M9 5V2h6v3', B, 2) + line('M9 9v11M12 9v11M15 9v11', '#24506a', 1.5),
  moveB: arrows(B), scaleB: scaleBox(B), rotateB: turn(B),
  ballArc: `<circle cx="10" cy="15" r="7" fill="#777" stroke="${K}" stroke-width="2"/>` + line('M10 15V9', K, 1.5) + line('M11 4c7 0 9 5 10 10', B, 3),
  penStick: line('M6 22L22 5', '#e09838', 3) + at(-1, 0, .6, `<g transform="matrix(-1 0 0 1 24 0)">${nib}</g>`),
  gridLock: mesh('#8da3c4') + line('M14 16v-2a3 3 0 0 1 6 0v2', K, 2) + shape('M12 16h10v7H12z', K),
  gridCam: mesh('#777') + cam,
  recycle: at(0, 1, .85, line('M6 11l5-8h3l3 5M21 12l2 5-2 4h-6M11 21H4l-2-4 3-5', '#f0a52a', 4)) + gear(31, 12, 3.5, K),
  axisGear: line('M3 3v18h16', '#f0b12a', 3) + text(12, 12, 10, '+1', '#ddd') + gear(31, 12, 3.5, K),
  ballHalf: ball(12, 12, 11, '#444') + shape('M4 20A11 11 0 0 1 20 4z', B),
  screen: shape('M1 2h22v20H1z', '#48bfe8') + shape('M1 2h22v3H1z', K) + ball(12, 13, 6, '#eee'),
  bolt: shape('M1 2h22v20H1z', '#48bfe8') + shape('M1 2h22v3H1z', K) + shape('M14 6l-7 7h4l-1 8 7-9h-4z', K),
  ballHatch: ball(12, 12, 11, '#1e7d9a') + line('M2 15L15 2M5 20L20 5M10 22L22 10', '#222', 1.5),
  cup: shape('M1 9h18c0 8-4 10-9 10S1 17 1 9z', '#e9862a', '#6a3408') + line('M18 11h5c0 4-3 5-6 4', '#e9862a', 2),
  slash: `<circle cx="12" cy="12" r="11" fill="#eee" stroke="#666"/>` + line('M5 4l14 16', '#555', 3),
  cycle: line('M4 10V5h9M19 4v9M20 15v5h-9M5 20v-8', '#eee', 3) + shape('M12 1l6 4-6 4zM12 23l-6-4 6-4zM15 12h8l-4 5zM1 12h8L5 7z', '#eee', '#444') + ball(12, 12, 3, '#444'),
  ladder: line('M4 1v22M20 1v22', '#ec5f2a', 3) + line('M4 6h16M4 18h16', '#ec5f2a', 2) + line('M4 12h11', '#fff', 3) + shape('M13 8l5 4-5 4z', '#fff'),
  cubeEdge: grayCube + line('M12 22V12l9-5v10z', '#35b5cf', 1.5),
  triRed: shape('M12 3l11 18H1z', '#f0592b', '#7a2a12'),

  cubeO: at(0, 1, .95, grayCube) + shape('M12 2l9 5-9 5-9-5z', O, K),
  cubeO2: at(0, 1, .95, grayCube) + shape('M12 1l10 5v3l-10 4L2 9V6z', O, K) + shape('M12 4l6 3-6 3-6-3z', '#999'),
  cubeGhost: ghostCube,
  cubeSplit: grayCube + line('M8 4l8 5v11', O, 1.5),
  bridge: shape('M2 2h20v8H2z', O) + shape('M2 14h7v8H2zM15 14h7v8h-7z', O) + shape('M6 12a6 5 0 0 1 12 0', '#555'),
  stretch: line('M12 1v22', O, 2) + line('M5 1v22M19 1v22M0 12h24', '#eee', 2) + shape('M10 12L6 8v8zM14 12l4-4v8z', '#eee'),
  dotsO: dots([[3, 5], [3, 19], [21, 12]], O, 2.5) + line('M6 12h8', '#eee', 2) + shape('M17 12l-5-3v6z', '#eee'),
  fold: line('M1 6l11 6 11-8M1 12l11 8 11-10M4 20l16-2', '#bbb', 1.5),
  weldO: line('M4 5v12', '#eee', 2.5) + shape('M4 22l-4-6h8z', '#eee') + shape('M8 14l10-3 5 7-11 4zM9 3l12-1-4 7z', O, '#6a3a08'),
  weld2: line('M4 5v12', '#eee', 2.5) + shape('M4 22l-4-6h8z', '#eee') + line('M9 5h12l-4 5H9zM9 19l12-5', '#ddd', 1.5) + line('M9 20h14', O, 2),
  weldGhost: line('M4 5v12', '#999', 2.5) + shape('M4 22l-4-6h8z', '#999') + line('M9 5h12l-4 6H9zM9 14h13l-5 7H9z', '#999', 1.5),
  penA: at(-1, -1, .55, `<g transform="matrix(-1 0 0 1 24 0)">${nib}</g>`) + line('M22 3c-4 11-7 18-13 19-5 0-3-8 2-9 4 0 3 9 7 9 3 0 4-2 5-4', K, 2.5),
  penB: line('M22 5c-4 10-7 16-13 17-5 0-3-8 2-9 4 0 3 9 7 9 3 0 4-2 5-4', K, 2.5) + shape('M3 10l7-7 9 3-6 7z', O, '#5a3408') + shape('M10 3l8-3 4 4-3 3z', '#eee'),
  polyGhost: line('M3 10l9-7 9 7-4 8M3 10l3 10h16', '#888', 2),
  armGhost: line('M12 3v9l-9 9M12 12l9 9M12 3l5 5', '#888', 2.5),
  shieldO: shape('M3 5l9-4 9 4-2 14-8 4-7-5z', '#e8661c', '#5a2408') + line('M3 5l9 4 9-4M12 9v8', '#7a3208', 1) + line('M20 12v7', '#fff', 2) + shape('M20 24l-4-6h8z', '#fff'),
  selRing: `<circle cx="12" cy="12" r="11" fill="none" stroke="#c5472a" stroke-width="2"/>` + cursor,
  selBox: line('M1 1h14v14H1z', '#c5472a', 2) + at(8, 8, .8, cursor),
  ringO: `<rect x="5" y="4" width="14" height="17" rx="6" fill="none" stroke="#ee5b28" stroke-width="5"/>` + line('M12 1v5M12 19v5M2 12h5M17 12h5', '#8a3010', 1),
  gridW: line('M2 2h20v20H2zM2 9h20M2 15h20M9 2v20M15 2v20', '#eee', 1.5),
  barsDown: line('M1 5h4M1 11h7M1 16h10M1 21h13', '#ccc', 3) + line('M19 4v11', '#ccc', 2) + shape('M19 21l-4-6h8z', '#ccc'),
  puzzle: shape('M2 10l7-4 3 3 8-6-1 7 4 3-8 3v5l-6-1-8 2 3-7z', '#f0a72a', '#5a3a08') + line('M9 6l2 14M12 9l3 6', '#5a3a08', 1),
  molecule: ball(12, 12, 6, '#3cc876') + line('M12 1l9 5v12l-9 5-9-5V6z', '#333', 1) + dots([[12, 2], [21, 6], [21, 18], [12, 22], [3, 18], [3, 6]], '#ddd', 2),
  frameAxis: shape('M1 2h22v20H1z', '#ddd') + shape('M4 6h16v13H4z', '#4c4c4c') + line('M7 8v9h10', '#e0502a', 2) + `<ellipse cx="14" cy="11" rx="3" ry="4" fill="none" stroke="#ddd" stroke-width="1.5"/>`,
  psr: text(12, 9, 12, 'PSR', '#f5a623') + text(17, 22, 13, '0', '#fff'),
  tris: shape('M6 2l4 7H2zM18 2l4 7h-8zM6 13l5 9H1z', '#c5472a', '#a43a20') + line('M18 11v6', '#fff', 2.5) + shape('M18 23l-4-6h8z', '#fff'),
  ruler: shape('M1 16h22v7H1z', '#f0b12a') + line('M5 16v4M9 16v3M13 16v4M17 16v3', '#333', 1.5) + line('M2 14L20 2M3 14h18M16 5l5 3', K, 2),

  spheres: `<g fill="none" stroke="#aaa" stroke-width="1"><circle cx="8" cy="7" r="7" fill="#777"/><circle cx="17" cy="17" r="8" fill="#777"/><ellipse cx="17" cy="17" rx="4" ry="8"/><path d="M9 17h16M10 13h14M10 21h14M1 6c5-3 9-3 14 0M8 0c4 4 4 10 0 14M0 16l7 7"/></g>`,
  modeCube: at(2, 2, .84, grayCube) + line('M12 0l11 6v12l-11 6-11-6V6z', '#e57f1e', 1.5),
  modeTex: grayCube + shape('M12 12l11-5v12l-11 5z', '#fff', '#e0802a') + shape('M13 13l3-1v4l-3 1zM19 11l3-2v4l-3 1zM16 16l3-2v4l-3 1zM13 20l3-1v3l-3 1zM19 17l3-1v3l-3 1z', '#111'),
  modeGrid: at(0, 5, 1, shape('M12-1l12 8-12 8L0 7z', '#e0871c') + line('M3 5l12 8M6 3l12 8M9 1l12 8M21 5L9 13M18 3L6 11M15 1L3 9', '#3a2408', 1.5)),
  modePoint: grayCube + dots([[12, 12], [21, 7]], O, 2.5),
  modeEdge: grayCube + line('M3 7l9-5M12 12l9-5', O, 2.5),
  modePoly: grayCube + shape('M12 2l9 5-9 5-9-5z', O),
  modeAxis: line('M4 3v16h16', '#e57f1e', 2) + shape('M4 0l3 5H1zM24 19l-5-3v6z', '#e57f1e'),
  mouse: line('M0 9c4 4 6 0 8-4s8-4 9 2', K, 1.5) + `<rect x="13" y="7" width="10" height="16" rx="4" fill="${O}" stroke="${K}"/>` + line('M13 13h10M18 7v6', K, 1),
  sGray: `<circle cx="12" cy="12" r="10.5" fill="#858585" stroke="#222" stroke-width="1.5"/>` + text(12, 18, 17, 'S'),
  magnet: magnet,
  gridRot: mesh('#777') + at(10, 10, .58, turn(O)),

  snapRot: snap(at(0, 0, .5, turn('#f5f5f5'))),
  snap3D: snap(text(8, 8, 11, '3D', '#f5f5f5')),
  snap2D: snap(text(8, 8, 11, '2D', '#f5f5f5')),
  snapDown: snap(line('M5 0v7', '#eee', 2.5) + shape('M5 11L1 6h8z', '#eee')),
  pieO: line('M21 5A10 10 0 1 0 19 20', K, 1.5) + shape('M12 12V2c6 0 10 5 10 10s-2 6-4 8z', O, K) + shape('M2 5h6v-5z', K),
  snapPts: snap(dots([[8, 2], [3, 8], [12, 8]], '#e8801c', 2.5)),
  snapSq: snap(line('M2 2h8v8H2z', '#c8661a', 2.5)),
  snapTri: snap(shape('M7 0l6 10H1z', '#f08a1c', '#7a4008')),
  snapArc: snap(line('M12 0c0 7-4 11-11 11', '#b8691c', 2)),
  snapAxis: snap(line('M3 1v9h8', K, 1.5) + shape('M3-2l2.500 4H.5zM14 10l-4-2.500v5z', K)),
  snapX: snap(line('M2 2l9 8M11 2L2 10', '#5a3410', 1.5) + dots([[6.5, 6]], O, 1.5)),
  snapStar: snap(shape('M7 3l3 4-3 4-3-4z', '#fff') + dots([[7, 0], [7, 14], [0, 7], [14, 7]], K, 1.5)),
  snapGrid: mesh('#777') + at(8, 8, .75, magnet),
  snapG1: ghostSnap(dots([[4, 3], [10, 3], [4, 9], [10, 9]], '#8b8b8b', 2)),
  snapG2: ghostSnap(line('M4 2v10M10 2v10M2 4h10M2 10h10', '#8b8b8b', 1.5)),
  snapLine: line('M2 20L17 3', '#f0962a', 2.5) + dots([[2, 20], [17, 3]], '#b8691c', 2) + at(8, 8, .75, magnet),
  snapG3: ghostSnap(line('M1 20L20 1', '#999', 2)),
  snapG4: ghostSnap(dots([[4, 4], [9, 9]], '#8b8b8b', 2)),

  navMove: arrows('#1c1c1c') + shape('M9 9h6v6H9z', '#555'),
  navZoom: line('M12 3v18', '#1c1c1c', 4) + shape('M12 0l6 7H6zM12 24l8-8H4z', '#1c1c1c'),
  navRot: turn('#1c1c1c'),
  navMax: line('M2 2h20v20H2zM2 12h10v10', '#1c1c1c', 2.5),
  search: `<circle cx="9" cy="7" r="5.5" fill="#666" stroke="#1c1c1c" stroke-width="2"/>` + line('M12 12l7 10', '#1c1c1c', 3.5),
  home: line('M2 12L12 2l10 10M6 10v12h12V10', '#1c1c1c', 2.5),
  eye: line('M2 14c5-6 15-6 20 0-5 5-15 5-20 0z', '#2a2a2a', 1.5),
  plusBox: line('M2 2h20v20H2zM2 4h20', '#1c1c1c', 2) + line('M12 8v11M7 13h11', '#1c1c1c', 3),
  backFwd: shape('M-14 12L4 3l-4 9 5 9z', '#161616') + line('M4 14l22-3-14 10', '#5c5c5c', 2),
  upGhost: line('M12 2l9 20-9-7-9 7z', '#5f5f5f', 2),
  lock: line('M7 11V6a5 5 0 0 1 10 0v2M4 11h16v11H4z', '#1c1c1c', 2) + line('M12 14v5', '#1c1c1c', 2),
  target: line('M12 12m-10 0a10 10 0 1 0 20 0a10 10 0 1 0-20 0M12 12m-5.500 0a5.500 5.500 0 1 0 11 0a5.500 5.500 0 1 0-11 0', '#1c1c1c', 2) + dots([[12, 12]], '#1c1c1c', 2),

  branch: line('M8-4v32M8 12h12', '#999', 2),
  branchBox: line('M8-4v32M8 12h12', '#999', 2) + `<rect x="2" y="6" width="12" height="12" fill="#474747" stroke="#999" stroke-width="2"/>` + line('M4 12h8', '#bbb', 2),
  branchEnd: line('M8-4v16h12', '#999', 2),
  objCyl: `<rect x="5" y="2" width="14" height="20" rx="4" fill="#7cc4f2"/><ellipse cx="12" cy="5" rx="7" ry="3" fill="#b8e0f8"/>`,
  objPoly: shape('M12 1l8 18H4z', '#6cb8ee') + dots([[12, 1], [2, 20], [22, 20]], '#eee', 2),
  objWrap: dots([[4, 4]], '#ddd', 3) + ball(16, 16, 6, '#5a78c8') + line('M2 14l5 7M14 3c4 0 6 3 7 6', '#ddd', 3),
  objBall: ball(12, 12, 10, '#6cb8ee') + line('M2 12h20M12 2v20', '#3c7cb0', 1),
  phong: ball(6, 6, 5, '#d88a30') + ball(18, 17, 5.5, '#d88a30'),
  checker: check('#a86428')
};

const svg = (name, box = '0 0 24 24') => `<svg viewBox="${box}" aria-hidden="true">${icons[name]}</svg>`;

function tool(spec) {
  if (spec === '-') return '<span class="filler"></span>';
  const name = spec.replace(/[!*^]/g, '');
  const wide = name.endsWith('W') && name !== 'gridW';
  let cls = 'tool';
  if (spec.includes('!')) cls += ' on';
  if (spec.includes('*')) cls += ' menu';
  if (wide) cls += ' w';
  // hand-drawn ring round the highlighted tool
  const ring = spec.includes('^') ? '<svg class="ring" viewBox="0 0 36 34"><path d="M4 4C12 1 26 1 31 4c3 8 2 18 1 26-8 3-22 3-29 1C1 22 2 10 4 4" fill="none" stroke="#ee2024" stroke-width="2"/></svg>' : '';
  const art = wide ? svg(name.slice(0, -1), '0 0 38 24') : svg(name);
  return `<button type="button" class="${cls}" aria-label="${name}">${art}${ring}</button>`;
}

document.querySelectorAll('[data-tools]').forEach(bar => {
  const gaps = { t: ' before-tight', w: ' before-wide', x: ' before-extra' };
  const parts = bar.dataset.tools.split('|');
  bar.innerHTML = parts.map((part, i) => {
    const next = (parts[i + 1] || '').charAt(0);
    const items = part.replace(/^[twx] /, '').trim().split(/\s+/);
    return `<div class="group${gaps[next] || ''}">${items.map(tool).join('')}</div>`;
  }).join('');
});

document.querySelectorAll('[data-icon]').forEach(el => {
  el.innerHTML = svg(el.dataset.icon);
});

document.querySelectorAll('[data-flags]').forEach(el => {
  const dot = el.dataset.flags.includes('red') ? '#f0504a' : '#7c7c7c';
  const tick = el.dataset.flags.includes('check') ? line('M18 7l2 2 4-6', '#3fd070', 1.5) : '';
  el.innerHTML = `<svg viewBox="0 0 25 12"><path d="M0 1h9v10H0z" fill="#7e7e7e"/><path d="M1 10l7-8" stroke="#444"/>${dots([[14, 3]], dot, 1.8)}${dots([[14, 9]], '#7c7c7c', 1.8)}${tick}</svg>`;
});
```
